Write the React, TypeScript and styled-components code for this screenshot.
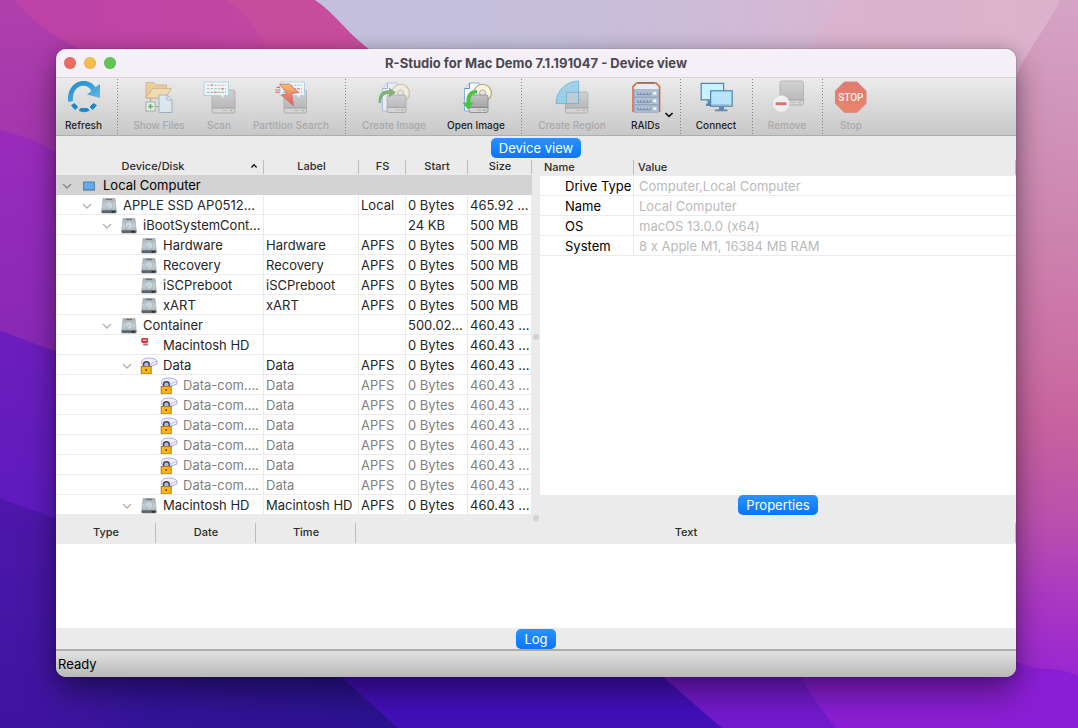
import React from "react";
import styled, { createGlobalStyle, css } from "styled-components";

const GlobalStyle = createGlobalStyle`
  *, *::before, *::after { box-sizing: border-box; }
  body { margin: 0; background: #5a1cb0; font-family: Inter, "Liberation Sans", sans-serif; color: #262626; }
  button { font: inherit; color: inherit; border: 0; padding: 0; background: none; }
  table { border-collapse: separate; border-spacing: 0; width: 100%; table-layout: fixed; }
  th, td { padding: 0; }
`;

/* ---------- Desktop and window shell ---------- */

const Desktop = styled.div`
  position: relative;
  isolation: isolate;
  min-height: 100vh;
  display: flex;
  padding: 49px 62px 51px 56px;
`;

const WallpaperSvg = styled.svg`
  position: absolute;
  inset: 0;
  width: 100%;
  height: 100%;
  z-index: -1;
`;

const SharedDefs = styled.svg`
  position: absolute;
  width: 0;
  height: 0;
`;

const Window = styled.main`
  flex: 1;
  min-width: 0;
  display: flex;
  flex-direction: column;
  border-radius: 10px;
  overflow: hidden;
  background: #ebebeb;
  box-shadow: 0 0 1px rgba(0, 0, 0, 0.6), 0 16px 32px rgba(0, 0, 0, 0.4), 0 0 16px rgba(0, 0, 0, 0.16);
`;

const TitleBar = styled.header`
  display: grid;
  grid-template-columns: 80px 1fr 80px;
  align-items: center;
  height: 28px;
  background: #f5f0f8;
`;

const Lights = styled.div`
  display: flex;
  gap: 8px;
  padding-left: 8px;
`;

const Light = styled.button<{ $color: string }>`
  width: 12px;
  height: 12px;
  border-radius: 50%;
  background: ${(p) => p.$color};
  box-shadow: inset 0 0 0 1px rgba(0, 0, 0, 0.06);
`;

const Title = styled.h1`
  margin: 0;
  text-align: center;
  font-size: 13px;
  font-weight: 700;
  line-height: 16px;
  color: #4b474e;
`;

/* ---------- Toolbar ---------- */

const Toolbar = styled.div`
  display: flex;
  height: 59px;
  border-top: 1px solid #d8d5da;
  border-bottom: 1px solid #aeaeae;
  background: linear-gradient(#ebebeb, #c8c8c8);
`;

const ToolButton = styled.button<{ $width: number }>`
  position: relative;
  width: ${(p) => p.$width}px;
  display: flex;
  flex-direction: column;
  align-items: center;
  gap: 5px;
  padding-top: 3px;
  font-size: 10px;
  font-weight: 500;
  line-height: 14px;
  white-space: nowrap;
  color: #1f1f1f;

  &:disabled { color: #a9a9a9; }
  &:disabled > svg { opacity: 0.58; }
`;

const ToolIcon = styled.svg`
  width: 32px;
  height: 32px;
  overflow: visible;
`;

const MenuArrow = styled.svg`
  position: absolute;
  right: 0;
  top: 33px;
  width: 10px;
  height: 8px;
`;

const ToolSeparator = styled.div`
  width: 12px;
  padding: 1px 0;
  display: flex;
  justify-content: center;

  &::before {
    content: "";
    width: 1px;
    background: repeating-linear-gradient(#838383 0 1px, transparent 1px 3px);
  }
`;

/* ---------- Panels ---------- */

const TabBar = styled.div<{ $height: number }>`
  display: flex;
  justify-content: center;
  align-items: flex-end;
  flex: none;
  height: ${(p) => p.$height}px;
`;

const TabButton = styled.button`
  height: 20px;
  padding: 0 8px;
  border-radius: 5px;
  font-size: 13px;
  line-height: 20px;
  color: #fff;
  background: linear-gradient(#2b92ff, #0577f8);
`;

const Split = styled.div`
  display: grid;
  grid-template-columns: minmax(0, 1fr) 8px minmax(0, 1fr);
`;

const Pane = styled.section`
  display: flex;
  flex-direction: column;
  min-width: 0;
`;

const Handle = styled.div<{ $height?: number }>`
  display: flex;
  align-items: center;
  justify-content: center;
  ${(p) => p.$height && `height: ${p.$height}px; flex: none;`}

  &::before {
    content: "";
    width: 6px;
    height: 6px;
    border-radius: 50%;
    background: #d2d2d2;
  }
`;

const WhiteFill = styled.div`
  flex: 1;
  min-height: 84px;
  background: #fff;
`;

const HeadCell = styled.th<{ $height: number; $left?: number }>`
  height: ${(p) => p.$height}px;
  padding-left: ${(p) => p.$left ?? 0}px;
  padding-bottom: 1px;
  text-align: ${(p) => (p.$left ? "left" : "center")};
  font-size: 11px;
  font-weight: 500;
  line-height: 14px;
  color: #2b2b2b;
  background: linear-gradient(#bdbdbd, #bdbdbd) right center / 1px calc(100% - 3px) no-repeat;
`;

const SortHead = styled.button`
  display: flex;
  align-items: center;
  width: 100%;
  padding-right: 6px;
  line-height: 14px;

  > span { flex: 1; text-align: center; }
  > svg { width: 8px; height: 6px; }
`;

const TreeRow = styled.tr<{ $selected?: boolean; $dim?: boolean }>`
  background: #fff;
  color: ${(p) => (p.$dim ? "#7f7f7f" : "#262626")};

  > td {
    height: 20px;
    padding: 2px 0 0 2px;
    overflow: hidden;
    white-space: nowrap;
    font-size: 13px;
    line-height: 17px;
    border-right: 1px solid #ebebeb;
    border-bottom: 1px solid #ebebeb;
  }

  > td:first-child { padding-left: 1px; }

  ${(p) =>
    p.$selected &&
    css`
      background: #d3d3d3;
      > td { border-color: #d3d3d3; color: #000; }
    `}
`;

const NameCell = styled.div<{ $level: number }>`
  display: grid;
  grid-template-columns: 20px 24px 1fr;
  align-items: center;
  height: 17px;
  padding-left: ${(p) => p.$level * 20}px;

  > span { padding-left: 2px; }
`;

const Expander = styled.button`
  display: flex;
  justify-content: center;
  align-items: center;
  height: 17px;

  > svg { width: 10px; height: 6px; }
`;

const SmallIcon = styled.svg`
  width: 16px;
  height: 16px;
  justify-self: center;
  overflow: visible;
`;

const PropRow = styled.tr`
  background: #fff;

  > * {
    height: 20px;
    padding-top: 2px;
    font-size: 13px;
    line-height: 17px;
    text-align: left;
    white-space: nowrap;
    border-bottom: 1px solid #ebebeb;
  }
  > th {
    padding-left: 25px;
    font-weight: 400;
    color: #000;
    border-right: 1px solid #ebebeb;
  }
  > td {
    padding-left: 5px;
    color: #bababa;
  }
`;

const StatusBar = styled.footer`
  flex: none;
  height: 28px;
  padding-left: 2px;
  border-top: 2px solid #adadad;
  background: linear-gradient(#e2e2e2, #b8b8b8);
  font-size: 13px;
  line-height: 27px;
  color: #000;
`;

const LogPane = styled.section`
  flex: 1;
  display: flex;
  flex-direction: column;
`;

/* ---------- Drawings ---------- */

const Wallpaper = () => (
  <WallpaperSvg viewBox="0 0 1078 728" preserveAspectRatio="none" aria-hidden="true">
    <defs>
      <linearGradient id="wBase" x1="0" y1="0" x2="0" y2="1">
        <stop offset="0" stopColor="#b03fab" />
        <stop offset="0.2" stopColor="#a236ad" />
      </linearGradient>
      <linearGradient id="wTop" x1="0" y1="0" x2="1" y2="0">
        <stop offset="0" stopColor="#bd42a8" />
        <stop offset="1" stopColor="#c84e9b" />
      </linearGradient>
      <linearGradient id="wSky" x1="0" y1="0" x2="1" y2="0">
        <stop offset="0" stopColor="#c3c0de" />
        <stop offset="0.35" stopColor="#c6bfdb" />
        <stop offset="0.7" stopColor="#d8b6d2" />
        <stop offset="1" stopColor="#dbb3cd" />
      </linearGradient>
      <linearGradient id="wRight" x1="0" y1="0" x2="0" y2="1">
        <stop offset="0" stopColor="#d5a4c4" />
        <stop offset="0.28" stopColor="#ce88b1" />
        <stop offset="0.5" stopColor="#cb6fa4" />
        <stop offset="0.6" stopColor="#c6609f" />
        <stop offset="0.72" stopColor="#ba4fae" />
        <stop offset="0.82" stopColor="#ab38c2" />
        <stop offset="0.92" stopColor="#9a28d0" />
        <stop offset="1" stopColor="#8a1ed4" />
      </linearGradient>
      <linearGradient id="wL1" x1="0" y1="0" x2="0" y2="1">
        <stop offset="0" stopColor="#9a2cbc" />
        <stop offset="1" stopColor="#8428b4" />
      </linearGradient>
      <linearGradient id="wL2" x1="0" y1="0" x2="0" y2="1">
        <stop offset="0" stopColor="#6d1ebc" />
        <stop offset="1" stopColor="#5a1ac0" />
      </linearGradient>
      <linearGradient id="wL3" x1="0" y1="0" x2="0" y2="1">
        <stop offset="0" stopColor="#4e17aa" />
        <stop offset="1" stopColor="#3d14a0" />
      </linearGradient>
      <linearGradient id="wBottom" x1="0" y1="0" x2="1" y2="0">
        <stop offset="0.1" stopColor="#3d14a0" stopOpacity="0" />
        <stop offset="0.35" stopColor="#32149a" />
        <stop offset="1" stopColor="#2a128e" />
      </linearGradient>
    </defs>
    <rect width="1078" height="728" fill="url(#wBase)" />
    <path d="M15 0C30 20 56 40 120 70H600V0Z" fill="url(#wTop)" />
    <path d="M225 0C245 12 260 30 270 60H420V0Z" fill="#cb509b" opacity="0.6" />
    <path d="M315 0C336 14 346 32 369 49L400 80H1078V0Z" fill="url(#wSky)" />
    <path d="M840 0Q820 24 811 50V80H1078V0Z" fill="#deb0c9" opacity="0.5" />
    <path d="M1060 0C1044 34 1024 50 1012 90V728H1078V0Z" fill="url(#wRight)" />
    <path d="M0 130Q36 138 64 158V400H0Z" fill="url(#wL1)" />
    <path d="M0 330Q34 344 64 354V560H0Z" fill="url(#wL2)" />
    <path d="M0 498Q30 510 64 521V650H340L420 728H0Z" fill="url(#wL3)" />
    <path d="M0 600H340L420 728H0Z" fill="url(#wBottom)" />
    <path d="M300 640L398 728H740L640 640Z" fill="#4310ba" />
    <path d="M620 640L722 728H860V640Z" fill="#741ace" />
    <path d="M780 640Q812 700 836 728H1078V676Q1066 670 1050 669Q1030 669 1012 660V640Z" fill="#8a1ed4" />
  </WallpaperSvg>
);

const Gradients = () => (
  <SharedDefs aria-hidden="true">
    <defs>
      <linearGradient id="gBlue" x1="0" y1="0" x2="1" y2="1">
        <stop offset="0" stopColor="#2088c2" />
        <stop offset="0.5" stopColor="#3ba2da" />
        <stop offset="1" stopColor="#70bde6" />
      </linearGradient>
      <linearGradient id="gDisk" x1="0" y1="0" x2="0" y2="1">
        <stop offset="0" stopColor="#c4c4c6" />
        <stop offset="1" stopColor="#97979b" />
      </linearGradient>
      <linearGradient id="gHdd" x1="0" y1="0" x2="0" y2="1">
        <stop offset="0" stopColor="#a4afb6" />
        <stop offset="0.55" stopColor="#c6d2d8" />
        <stop offset="1" stopColor="#9eaab2" />
      </linearGradient>
      <linearGradient id="gBolt" x1="0" y1="0" x2="0" y2="1">
        <stop offset="0" stopColor="#ffb400" />
        <stop offset="0.45" stopColor="#f04a1c" />
        <stop offset="1" stopColor="#cc1010" />
      </linearGradient>
      <linearGradient id="gStop" x1="0" y1="0" x2="0" y2="1">
        <stop offset="0" stopColor="#dc2a1c" />
        <stop offset="1" stopColor="#f84c1c" />
      </linearGradient>
    </defs>
  </SharedDefs>
);

const Disk = ({ x, y, w, h }: { x: number; y: number; w: number; h: number }) => (
  <g>
    <rect x={x} y={y} width={w} height={h} rx="2" fill="url(#gDisk)" stroke="#85858a" strokeWidth="0.8" />
    <rect x={x + 0.5} y={y + h - 4.6} width={w - 1} height="4.1" rx="1.4" fill="#d4d4d6" />
    <path d={`M${x + 0.5} ${y + h - 5}H${x + w - 0.5}`} stroke="#75757a" strokeWidth="0.7" />
    <path d={`M${x + w * 0.45} ${y + h - 2.5}h${w * 0.2}`} stroke="#98989c" strokeWidth="0.8" />
    <path d={`M${x + w - 5} ${y + h - 2.5}h2.5`} stroke="#35b558" strokeWidth="1.1" />
  </g>
);

const Bubble = ({ x }: { x: number }) => (
  <g>
    <path d={`M${x} 1H${x + 24.5}V14.5H${x + 20}V18L${x + 16} 14.5H${x}Z`} fill="#fbffff" stroke="#8dc8ea" strokeWidth="1" />
    {[4.2, 7.8, 11.4].map((y, i) => (
      <g key={y} strokeWidth="1.1" strokeDasharray="2.4 1.2">
        <path d={`M${x + 3} ${y}H${x + 22}`} stroke={i === 0 ? "#7fa7ae" : "#5fa193"} />
        <path d={`M${x + (i === 1 ? 17.4 : i === 0 ? 6.6 : 10.2)} ${y}h${i === 1 ? 2.4 : 2.4}`} stroke="#e83a3a" strokeWidth="1.4" />
      </g>
    ))}
  </g>
);

const DocDisc = () => (
  <g>
    <path d="M9.5 2H19V30H4.5V7.5Z" fill="#f4f9ff" stroke="#86b2e6" strokeWidth="1" />
    <path d="M9.5 2V7.5H4.5" fill="#d6e8fb" stroke="#5b93d8" strokeWidth="1" />
    <circle cx="22.6" cy="12" r="8.8" fill="#f5f1e8" stroke="#c39c64" strokeWidth="1.1" />
    <circle cx="22.6" cy="12" r="3" fill="#e4e4e4" stroke="#c9a878" />
    <Disk x={9} y={14} w={19} h={17.5} />
  </g>
);

const icons: Record<string, React.ReactNode> = {
  refresh: (
    <>
      <path d="M0.4 21C-1.4 10 5 0 16 0C21 0 25 2.4 27.5 6.2L32 3V17L19 13.4L23.4 10C21.4 6 18.4 4.6 15 4.8C8.4 5 4 11.6 5 20Z" fill="url(#gBlue)" />
      <path d="M3.4 24.4L6.4 22.6L9.6 26L7.2 28.6Z" fill="#1c88c6" stroke="#1c88c6" strokeLinejoin="round" />
      <path d="M12.4 27.6H19.6L21 29.6Q16 32 11.4 29.6Z" fill="#1c88c6" stroke="#1c88c6" strokeLinejoin="round" />
      <path d="M28.4 24.4L25.4 22.6L22 26L24.6 28.6Z" fill="#1c88c6" stroke="#1c88c6" strokeLinejoin="round" />
    </>
  ),
  files: (
    <>
      <path d="M3 17V1.6H11L13 4H23.5V17Z" fill="#f0bf62" stroke="#b08a4a" strokeWidth="0.8" />
      <path d="M3 17L9.6 7.4H28.6L22.6 17Z" fill="#ffd58a" stroke="#b08a4a" strokeWidth="0.8" />
      <path d="M7.5 17V21M12 25.5H16" stroke="#777" strokeWidth="0.9" />
      <rect x="3" y="21" width="9" height="9" fill="#f4fff2" stroke="#888" />
      <path d="M5 25.5H10M7.5 23V28" stroke="#1d9a1d" strokeWidth="1.6" />
      <path d="M16 14H24L29 19V31.5H16Z" fill="#dceefd" stroke="#7c97b4" />
      <path d="M24 14V19H29Z" fill="#fff" stroke="#7c97b4" />
    </>
  ),
  scan: (
    <>
      <Disk x={9} y={9} w={23} h={23} />
      <Bubble x={1} />
    </>
  ),
  partition: (
    <>
      <Disk x={9} y={9} w={22.6} h={23} />
      <Bubble x={5} />
      <path d="M4.8 3.2H14.5L23.5 11.4L16.6 12.6L18.4 24.8L6.4 14L12 12.6Z" fill="url(#gBolt)" stroke="#c22" strokeWidth="1" />
      <path d="M1.6 6.4H5M0 9H5.4M0.6 11.4H4.4" stroke="#c22" strokeWidth="1.2" />
    </>
  ),
  create: (
    <>
      <DocDisc />
      <path d="M0.6 22C0.4 13 4 9 11 9.4V6.4L18 11.6L11 16.4V13.2C6 13 3.4 15 3.2 22Z" fill="#3f8f2c" />
    </>
  ),
  open: (
    <>
      <DocDisc />
      <path d="M17 9C10 9 6.4 12 6.4 21.6H2.4L8 28.6L13.6 21.6H10.4C10.4 15 12.4 12.6 17 12.6Z" fill="#4cc244" />
    </>
  ),
  region: (
    <>
      <Disk x={9.4} y={11} w={22.4} h={21} />
      <path d="M0 22.6A22.6 22.6 0 0 1 22.6 0V22.6Z" fill="#6cc4ee" />
      <rect x="10.4" y="11.4" width="12.2" height="11.2" fill="#aabfcc" stroke="#3d98c4" strokeWidth="1" />
      <path d="M0 22.6A22.6 22.6 0 0 1 22.6 0V22.6Z" fill="none" stroke="#3a98cc" />
    </>
  ),
  raid: (
    <>
      <path d="M3 31V5.6L6.6 2H26L29.6 5.6V31" fill="#f0e6e2" stroke="#d4694c" strokeWidth="1.6" />
      <path d="M8 1.8H24.6" stroke="#86706a" strokeWidth="1.4" />
      <path d="M4.6 8.6L7.8 4H24.8L28 8.6Z" fill="#e6ecf2" />
      {[8.8, 16.4, 24].map((y) => (
        <g key={y}>
          <rect x="4.2" y={y} width="24.2" height="7.2" fill="#b0c0d6" stroke="#8a9db9" strokeWidth="0.7" />
          <path d={`M7.4 ${y + 4.8}H20.6M7.6 ${y + 2.6}v2.2M10.9 ${y + 2.6}v2.2M14.1 ${y + 2.6}v2.2M17.3 ${y + 2.6}v2.2M20.4 ${y + 2.6}v2.2`} stroke="#6b7f9e" strokeWidth="0.8" fill="none" />
          <circle cx="24.8" cy={y + 3.4} r="1.5" fill="#fff" />
        </g>
      ))}
    </>
  ),
  connect: (
    <>
      <path d="M7 19.4H12V22.6H15V25H6V22.6H8Z" fill="#5f87ad" />
      <rect x="1.2" y="2.4" width="22.4" height="16.4" fill="#c8f2fd" stroke="#4f84ab" strokeWidth="1.2" />
      <path d="M19 26H24V28.6H27.4V30.2H15V28.6H19Z" fill="#6088b4" />
      <rect x="10.6" y="9.8" width="21.6" height="15.4" fill="#b8e4fd" stroke="#4f84ab" strokeWidth="1.2" />
      <path d="M11.2 24H31.6" stroke="#7fa6c8" strokeWidth="1.2" />
      <path d="M29 24h2" stroke="#dfe25a" strokeWidth="1.2" />
    </>
  ),
  remove: (
    <>
      <Disk x={9} y={0} w={23.4} h={24} />
      <circle cx="10" cy="22.8" r="8.6" fill="#fff" stroke="#c8c8c8" strokeWidth="0.8" />
      <rect x="4.6" y="21.3" width="10.8" height="3" rx="0.6" fill="#e02424" />
    </>
  ),
  stop: (
    <>
      <path d="M9.4 1H22L31 9.8V22.4L22 31.2H9.4L0.6 22.4V9.8Z" fill="url(#gStop)" stroke="#d6402c" />
      <text x="15.8" y="20" textAnchor="middle" fontFamily="Roboto, sans-serif" fontSize="10" fontWeight="500" fill="#fff">STOP</text>
    </>
  ),
};

const smallIcons: Record<string, React.ReactNode> = {
  computer: (
    <>
      <rect x="2.6" y="4" width="10.8" height="7.6" fill="#62abee" stroke="#4c7ca6" strokeWidth="0.9" />
      <path d="M2 12.6H14" stroke="#8e9499" strokeWidth="0.9" />
    </>
  ),
  hdd: (
    <>
      <path d="M2 0.6H14L15.2 12V14H0.8V12Z" fill="url(#gHdd)" stroke="#8f9ba2" strokeWidth="0.5" />
      <path d="M5 1.4H11" stroke="#6b757b" strokeWidth="1.4" />
      <circle cx="8" cy="7.4" r="3.8" fill="#cdd7dc" stroke="#a6b2b9" strokeWidth="0.7" />
      <path d="M8 7.4L5.4 10.4" stroke="#98a5ad" strokeWidth="0.8" />
      <rect x="0.6" y="12.2" width="14.8" height="3" rx="0.6" fill="#5c666c" />
      <path d="M10.6 13.8H13.6" stroke="#1d2224" strokeWidth="1.4" />
    </>
  ),
  offline: (
    <>
      <rect x="0.2" y="0" width="7" height="5" rx="1.4" fill="#dd3340" />
      <path d="M1.8 2.2H5.6" stroke="#fff" strokeWidth="0.9" />
      <path d="M2 5.4H6.8L7 7.6H2.4Z" fill="#7f8b8b" />
    </>
  ),
  lock: (
    <>
      <path d="M0.6 3.4Q2 -0.2 8 0Q15 0.4 16 3.2V6L10 8.4L1 7Z" fill="#f0f0ff" stroke="#9a9ad8" strokeWidth="0.8" />
      <path d="M10 8.4V5.6L16 3.2" fill="none" stroke="#b4b4e2" strokeWidth="0.8" />
      <path d="M2.6 8.6V6.2Q2.6 3.8 5.4 3.8Q8.2 3.8 8.2 6.2V8.6" fill="#b9b9e6" stroke="#3f4458" strokeWidth="1.4" />
      <rect x="0.2" y="8.4" width="10" height="7.6" fill="#f8b713" stroke="#b06c10" strokeWidth="0.9" />
      <path d="M5.2 11V13" stroke="#6a3c00" strokeWidth="1.4" />
    </>
  ),
};

/* ---------- Data ---------- */

type Tool = { id: string; label: string; width: number; enabled?: boolean; menu?: boolean };

const toolGroups: Tool[][] = [
  [{ id: "refresh", label: "Refresh", width: 55, enabled: true }],
  [
    { id: "files", label: "Show Files", width: 72 },
    { id: "scan", label: "Scan", width: 48 },
    { id: "partition", label: "Partition Search", width: 96 },
  ],
  [
    { id: "create", label: "Create Image", width: 86 },
    { id: "open", label: "Open Image", width: 78, enabled: true },
  ],
  [
    { id: "region", label: "Create Region", width: 90 },
    { id: "raid", label: "RAIDs", width: 57, enabled: true, menu: true },
  ],
  [{ id: "connect", label: "Connect", width: 60, enabled: true }],
  [{ id: "remove", label: "Remove", width: 58 }],
  [{ id: "stop", label: "Stop", width: 46 }],
];

type Device = { name: string; level: number; icon: string; open?: boolean; dim?: boolean; cells: string[] };

const dataVolume: Device = {
  name: "Data-com....",
  level: 4,
  icon: "lock",
  dim: true,
  cells: ["Data", "APFS", "0 Bytes", "460.43 ..."],
};

const devices: Device[] = [
  { name: "Local Computer", level: 0, icon: "computer", open: true, cells: ["", "", "", ""] },
  { name: "APPLE SSD AP0512...", level: 1, icon: "hdd", open: true, cells: ["", "Local", "0 Bytes", "465.92 ..."] },
  { name: "iBootSystemCont...", level: 2, icon: "hdd", open: true, cells: ["", "", "24 KB", "500 MB"] },
  { name: "Hardware", level: 3, icon: "hdd", cells: ["Hardware", "APFS", "0 Bytes", "500 MB"] },
  { name: "Recovery", level: 3, icon: "hdd", cells: ["Recovery", "APFS", "0 Bytes", "500 MB"] },
  { name: "iSCPreboot", level: 3, icon: "hdd", cells: ["iSCPreboot", "APFS", "0 Bytes", "500 MB"] },
  { name: "xART", level: 3, icon: "hdd", cells: ["xART", "APFS", "0 Bytes", "500 MB"] },
  { name: "Container", level: 2, icon: "hdd", open: true, cells: ["", "", "500.02...", "460.43 ..."] },
  { name: "Macintosh HD", level: 3, icon: "offline", cells: ["", "", "0 Bytes", "460.43 ..."] },
  { name: "Data", level: 3, icon: "lock", open: true, cells: ["Data", "APFS", "0 Bytes", "460.43 ..."] },
  ...Array.from({ length: 6 }, () => dataVolume),
  { name: "Macintosh HD", level: 3, icon: "hdd", open: true, cells: ["Macintosh HD", "APFS", "0 Bytes", "460.43 ..."] },
];

const properties = [
  ["Drive Type", "Computer,Local Computer"],
  ["Name", "Local Computer"],
  ["OS", "macOS 13.0.0 (x64)"],
  ["System", "8 x Apple M1, 16384 MB RAM"],
];

/* ---------- App ---------- */

const DeviceTree = () => (
  <table>
    <colgroup>
      <col />
      <col width="95" />
      <col width="47" />
      <col width="62" />
      <col width="64" />
    </colgroup>
    <thead>
      <tr>
        <HeadCell $height={17}>
          <SortHead type="button">
            <span>Device/Disk</span>
            <svg viewBox="0 0 8 6" fill="none" stroke="#111" strokeWidth="1.4" aria-hidden="true">
              <path d="M1.4 4.4L4 1.8L6.6 4.4" />
            </svg>
          </SortHead>
        </HeadCell>
        {["Label", "FS", "Start", "Size"].map((h) => (
          <HeadCell key={h} $height={17}>{h}</HeadCell>
        ))}
      </tr>
    </thead>
    <tbody>
      {devices.map((d, i) => (
        <TreeRow key={i} $selected={i === 0} $dim={d.dim}>
          <td>
            <NameCell $level={d.level}>
              {d.open ? (
                <Expander type="button" aria-label={`Collapse ${d.name}`}>
                  <svg viewBox="0 0 10 6" fill="none" stroke={i === 0 ? "#858585" : "#b0b0b0"} strokeWidth="1.3">
                    <path d="M1 1L5 5L9 1" />
                  </svg>
                </Expander>
              ) : (
                <i />
              )}
              <SmallIcon viewBox="0 0 16 16" aria-hidden="true">{smallIcons[d.icon]}</SmallIcon>
              <span>{d.name}</span>
            </NameCell>
          </td>
          {d.cells.map((c, j) => (
            <td key={j}>{c}</td>
          ))}
        </TreeRow>
      ))}
    </tbody>
  </table>
);

export default function App() {
  return (
    <Desktop>
      <GlobalStyle />
      <Wallpaper />
      <Gradients />
      <Window>
        <TitleBar>
          <Lights>
            <Light type="button" aria-label="Close" $color="#ec6a5e" />
            <Light type="button" aria-label="Minimize" $color="#f4be4f" />
            <Light type="button" aria-label="Zoom" $color="#61c454" />
          </Lights>
          <Title>R-Studio for Mac Demo 7.1.191047 - Device view</Title>
        </TitleBar>

        <Toolbar role="toolbar">
          {toolGroups.map((group, g) => (
            <React.Fragment key={g}>
              {g > 0 && <ToolSeparator />}
              {group.map((t) => (
                <ToolButton key={t.id} type="button" $width={t.width} disabled={!t.enabled}>
                  <ToolIcon viewBox="0 0 32 32" aria-hidden="true">{icons[t.id]}</ToolIcon>
                  {t.label}
                  {t.menu && (
                    <MenuArrow viewBox="0 0 10 8" fill="none" stroke="#111" strokeWidth="1.6">
                      <path d="M1.4 2L5 5.4L8.6 2" />
                    </MenuArrow>
                  )}
                </ToolButton>
              ))}
            </React.Fragment>
          ))}
        </Toolbar>

        <TabBar $height={22}>
          <TabButton type="button">Device view</TabButton>
        </TabBar>

        <Split>
          <Pane>
            <DeviceTree />
          </Pane>
          <Handle />
          <Pane>
            <table>
              <colgroup>
                <col width="94" />
                <col />
              </colgroup>
              <thead>
                <tr>
                  <HeadCell $height={18} $left={4}>Name</HeadCell>
                  <HeadCell $height={18} $left={4}>Value</HeadCell>
                </tr>
              </thead>
              <tbody>
                {properties.map(([name, value]) => (
                  <PropRow key={name}>
                    <th scope="row">{name}</th>
                    <td>{value}</td>
                  </PropRow>
                ))}
              </tbody>
            </table>
            <WhiteFill />
            <TabBar $height={20}>
              <TabButton type="button">Properties</TabButton>
            </TabBar>
          </Pane>
        </Split>

        <Handle $height={6} />

        <LogPane>
          <table>
            <colgroup>
              <col width="100" />
              <col width="100" />
              <col width="100" />
              <col />
            </colgroup>
            <thead>
              <tr>
                {["Type", "Date", "Time", "Text"].map((h) => (
                  <HeadCell key={h} $height={23}>{h}</HeadCell>
                ))}
              </tr>
            </thead>
          </table>
          <WhiteFill />
          <TabBar $height={21}>
            <TabButton type="button">Log</TabButton>
          </TabBar>
        </LogPane>

        <StatusBar>Ready</StatusBar>
      </Window>
    </Desktop>
  );
}
